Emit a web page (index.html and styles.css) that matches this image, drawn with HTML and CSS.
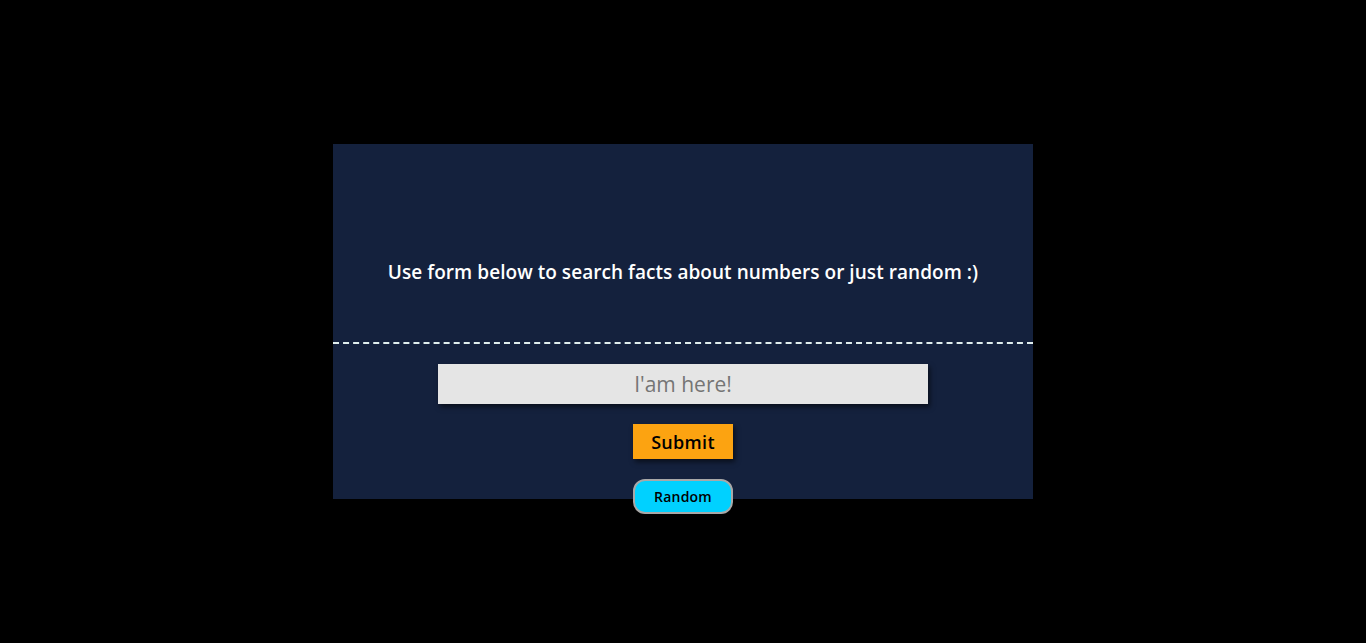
FILE: index.html
```html
<!DOCTYPE html>
<html lang="en">
<head>
<meta charset="utf-8">
<title>Number facts</title>
<link rel="stylesheet" href="styles.css">
</head>
<body>
<main class="page">
  <section class="panel">
    <header class="panel-head">
      <h1 class="title">Use form below to search facts about numbers or just random :)</h1>
    </header>
    <form class="form">
      <input class="field" type="text" placeholder="I'am here!">
      <button class="btn-submit" type="button">Submit</button>
      <button class="btn-random" type="button">Random</button>
    </form>
  </section>
</main>
</body>
</html>
```

FILE: styles.css
```css
* { box-sizing: border-box; }
html, body { margin: 0; height: 100%; background: #000; }
body { font-family: "Open Sans", "Noto Sans", sans-serif; }
.page {
  height: 100%;
  display: flex;
  align-items: center;
  justify-content: center;
}
.panel {
  width: 700px;
  height: 355px;
  background: #14213d;
  display: flex;
  flex-direction: column;
}
.panel-head {
  height: 200px;
  flex: none;
  padding-top: 116px;
  border-bottom: 2px dashed #e0eeee;
  text-align: center;
}
.title {
  margin: 0;
  color: #fff;
  font-size: 19px;
  line-height: 24px;
  font-weight: 600;
  letter-spacing: 0.05px;
}
.form {
  display: flex;
  flex-direction: column;
  align-items: center;
  gap: 20px;
  padding-top: 20px;
}
.field {
  width: 490px;
  height: 40px;
  border: none;
  outline: none;
  background: #e5e5e5;
  box-shadow: 2px 3px 5px rgba(0,0,0,0.55);
  text-align: center;
  font-family: inherit;
  font-size: 21px;
  color: #333;
}
.field::placeholder { color: #757575; }
.btn-submit {
  width: 100px;
  height: 35px;
  border: none;
  background: #fca311;
  box-shadow: 2px 3px 5px rgba(0,0,0,0.55);
  font-family: inherit;
  font-size: 18px;
  font-weight: 600;
  letter-spacing: 0.3px;
  color: #000;
  padding: 0;
}
.btn-random {
  width: 100px;
  height: 35px;
  border: 2px solid #a8a8a8;
  border-radius: 12px;
  background: #00d1ff;
  font-family: inherit;
  font-size: 14px;
  font-weight: 600;
  letter-spacing: 0.2px;
  color: #000;
  padding: 0;
}
```
